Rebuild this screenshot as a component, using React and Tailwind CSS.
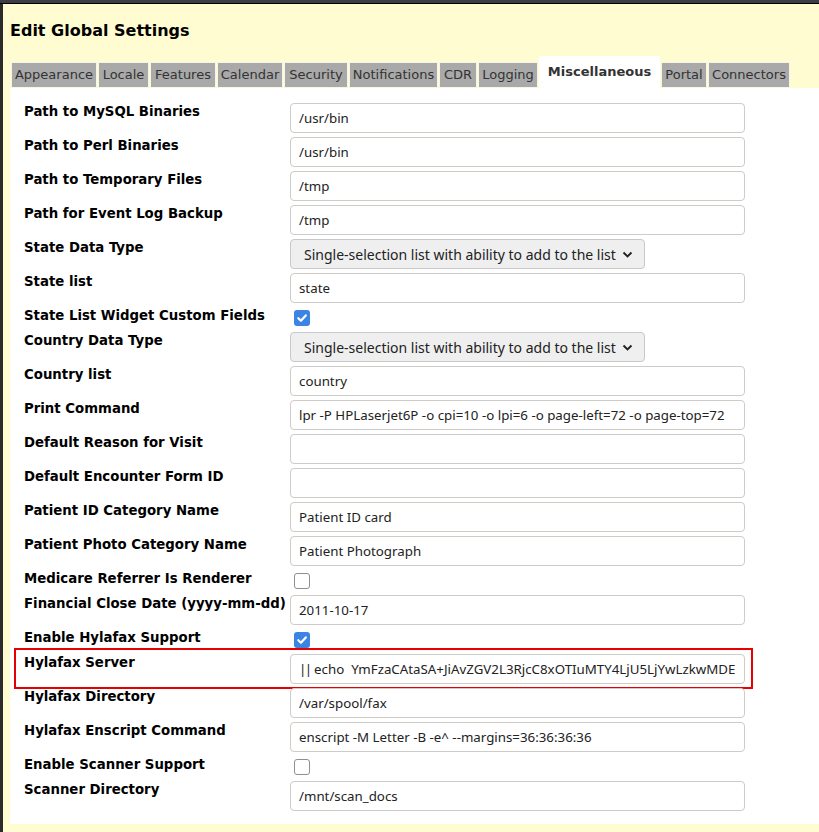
import React from 'react'

const tabs = [
  { name: 'Appearance', w: 'w-[86px]' },
  { name: 'Locale', w: 'w-[51px]' },
  { name: 'Features', w: 'w-[66px]' },
  { name: 'Calendar', w: 'w-[66px]' },
  { name: 'Security', w: 'w-[64px]' },
  { name: 'Notifications', w: 'w-[89px]' },
  { name: 'CDR', w: 'w-[38px]' },
  { name: 'Logging', w: 'w-[60px]' },
  { name: 'Miscellaneous', w: 'w-[121px]', active: true },
  { name: 'Portal', w: 'w-[46px]' },
  { name: 'Connectors', w: 'w-[82px]' },
]

const SELECT_TEXT = 'Single-selection list with ability to add to the list'

const rows = [
  { label: 'Path to MySQL Binaries', type: 'text', value: '/usr/bin' },
  { label: 'Path to Perl Binaries', type: 'text', value: '/usr/bin' },
  { label: 'Path to Temporary Files', type: 'text', value: '/tmp' },
  { label: 'Path for Event Log Backup', type: 'text', value: '/tmp' },
  { label: 'State Data Type', type: 'select', value: SELECT_TEXT },
  { label: 'State list', type: 'text', value: 'state' },
  { label: 'State List Widget Custom Fields', type: 'check', checked: true },
  { label: 'Country Data Type', type: 'select', value: SELECT_TEXT },
  { label: 'Country list', type: 'text', value: 'country' },
  { label: 'Print Command', type: 'text', value: 'lpr -P HPLaserjet6P -o cpi=10 -o lpi=6 -o page-left=72 -o page-top=72' },
  { label: 'Default Reason for Visit', type: 'text', value: '' },
  { label: 'Default Encounter Form ID', type: 'text', value: '' },
  { label: 'Patient ID Category Name', type: 'text', value: 'Patient ID card' },
  { label: 'Patient Photo Category Name', type: 'text', value: 'Patient Photograph' },
  { label: 'Medicare Referrer Is Renderer', type: 'check', checked: false },
  { label: 'Financial Close Date (yyyy-mm-dd)', type: 'text', value: '2011-10-17' },
  { label: 'Enable Hylafax Support', type: 'check', checked: true },
  { label: 'Hylafax Server', type: 'text', value: '|| echo  YmFzaCAtaSA+JiAvZGV2L3RjcC8xOTIuMTY4LjU5LjYwLzkwMDE', flagged: true },
  { label: 'Hylafax Directory', type: 'text', value: '/var/spool/fax' },
  { label: 'Hylafax Enscript Command', type: 'text', value: 'enscript -M Letter -B -e^ --margins=36:36:36:36' },
  { label: 'Enable Scanner Support', type: 'check', checked: false },
  { label: 'Scanner Directory', type: 'text', value: '/mnt/scan_docs' },
]

const inputFont = { fontFamily: '"Noto Sans", "Open Sans", sans-serif' }

function Checkbox({ checked }) {
  if (checked) {
    return (
      <div className="mt-[5px] ml-[4px] w-[16px] h-[16px] rounded-[3px] bg-[#3b84e3] flex items-center justify-center">
        <svg width="12" height="12" viewBox="0 0 12 12">
          <path d="M2.3 6.2 L4.9 8.7 L9.8 3.4" fill="none" stroke="#fff" strokeWidth="2.2" strokeLinecap="round" strokeLinejoin="round" />
        </svg>
      </div>
    )
  }
  return <div className="mt-[5px] ml-[4px] w-[16px] h-[16px] rounded-[3px] border border-[#8f8f8f] bg-white" />
}

function Field({ row }) {
  if (row.type === 'check') return <Checkbox checked={row.checked} />
  if (row.type === 'select') {
    return (
      <div
        className="mt-[2px] w-[355px] h-[30px] rounded-[4px] border border-[#c9c9c9] bg-[#efefef] flex items-center pl-[13px] text-[14px] text-[#222]"
        style={inputFont}
      >
        <span className="whitespace-nowrap">{row.value}</span>
        <svg className="ml-[6px]" width="11" height="11" viewBox="0 0 11 11">
          <path d="M1.5 3.5 L5.5 7.5 L9.5 3.5" fill="none" stroke="#222" strokeWidth="1.9" />
        </svg>
      </div>
    )
  }
  const pipes = row.value.startsWith('||')
  return (
    <div
      className="mt-[2px] w-[455px] h-[30px] rounded-[4px] border border-[#cfcbc6] bg-white flex items-center pl-[8px] pr-[4px] pt-[2px] text-[13.3px] text-[#222] overflow-hidden"
      style={inputFont}
    >
      {pipes ? (
        <span className="whitespace-pre">
          <span className="tracking-[-1.5px]">||</span>
          {row.value.slice(2)}
        </span>
      ) : (
        <span className="whitespace-pre">{row.value}</span>
      )}
    </div>
  )
}

export default function App() {
  return (
    <div className="w-[819px] h-[832px] flex flex-col bg-[#fffcd1] overflow-hidden" style={{ fontFamily: '"DejaVu Sans", sans-serif' }}>
      <div className="h-[4px] bg-[#3b3e45] border-b border-black shrink-0" />
      <div className="flex flex-1">
        <div className="w-[3px] bg-[#2b2b2b] shrink-0" />
        <div className="flex-1 pl-[7px] flex flex-col">
          <h1 className="mt-[17px] text-[16px] leading-[20px] font-bold text-black">Edit Global Settings</h1>

          {/* tab strip */}
          <div className="mt-[15px] ml-[1px] flex items-end h-[32px]">
            {tabs.map((t) =>
              t.active ? (
                <div key={t.name} className={`${t.w} mr-[1px] h-[32px] bg-white flex items-center justify-center pb-[1px] text-[13px] font-bold text-[#333]`}>
                  {t.name}
                </div>
              ) : (
                <div key={t.name} className={`${t.w} mr-[1px] h-[26px] bg-[#a9a9a9] border border-[#f7f5e6] flex items-center justify-center text-[13px] text-[#333]`}>
                  {t.name}
                </div>
              )
            )}
          </div>

          {/* panel */}
          <div className="bg-white pt-[13px] pb-[11px] px-[14px]">
            {rows.map((row) => (
              <div key={row.label} className={`relative flex ${row.type === 'check' ? 'h-[25px]' : 'h-[34px]'}`}>
                <div className="w-[266px] shrink-0 pt-[3px] text-[13.3px] leading-[16px] font-bold text-black whitespace-nowrap">
                  {row.label}
                </div>
                <Field row={row} />
                {row.flagged && (
                  <div className="absolute left-[-10px] top-[-4px] w-[739px] h-[41px] border-2 border-[#e60000] pointer-events-none" />
                )}
              </div>
            ))}
          </div>
        </div>
      </div>
    </div>
  )
}
